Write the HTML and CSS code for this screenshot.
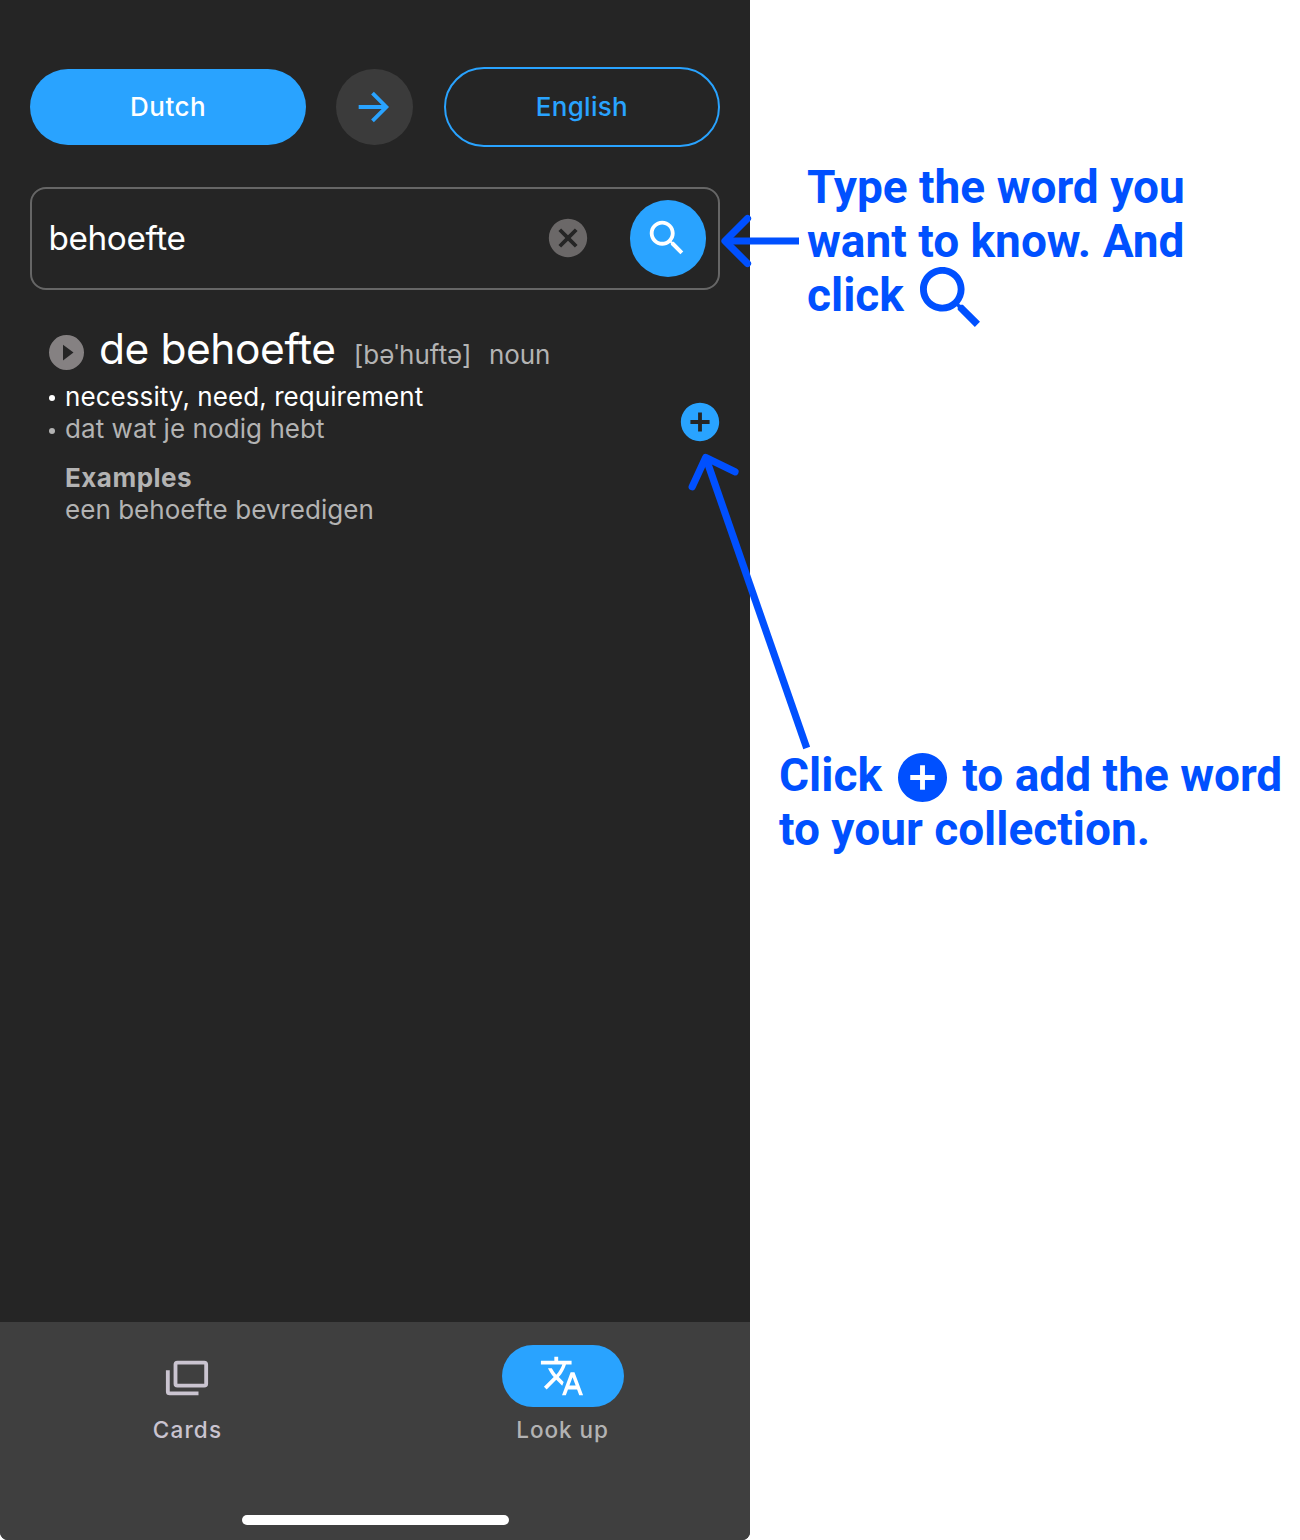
FILE: index.html
```html
<!DOCTYPE html>
<html lang="en">
<head>
<meta charset="utf-8">
<title>Dictionary look up</title>
<link rel="stylesheet" href="styles.css">
</head>
<body>
<main class="page">
  <section class="phone">
    <div class="languages">
      <button class="lang lang-from">Dutch</button>
      <button class="swap" aria-label="Swap"><svg class="icon" viewBox="0 0 24 24"><path d="M4 11v2h12l-5.5 5.5 1.42 1.42L19.84 12l-7.92-7.92L10.5 5.5 16 11z"/></svg></button>
      <button class="lang lang-to">English</button>
    </div>
    <div class="search">
      <span class="query">behoefte</span>
      <svg class="icon clear" viewBox="0 0 24 24"><path d="M12 2C6.470 2 2 6.470 2 12s4.470 10 10 10 10-4.470 10-10S17.530 2 12 2zm5 13.590L15.590 17 12 13.410 8.410 17 7 15.590 10.590 12 7 8.410 8.410 7 12 10.590 15.590 7 17 8.410 13.410 12z"/></svg>
      <button class="go" aria-label="Search"><svg class="icon" viewBox="0 0 24 24"><path d="M15.5 14h-.79l-.28-.27C15.410 12.590 16 11.110 16 9.500 16 5.910 13.090 3 9.500 3S3 5.910 3 9.500 5.910 16 9.500 16c1.610 0 3.090-.59 4.230-1.570l.27.28v.79l5 4.990L20.490 19zm-6 0C7.010 14 5 11.990 5 9.500S7.010 5 9.500 5 14 7.010 14 9.500 11.990 14 9.500 14z"/></svg></button>
    </div>
    <article class="entry">
      <header class="headline">
        <svg class="play" viewBox="2 2 20 20"><path fill-rule="evenodd" d="M12 2a10 10 0 1 0 0 20 10 10 0 0 0 0-20zM10 16.500v-9l6 4.500z"/></svg>
        <h1 class="word">de behoefte</h1>
        <span class="phonetic">[bəˈhuftə]</span>
        <span class="kind">noun</span>
      </header>
      <div class="details">
        <div class="senses">
          <p class="sense translation">necessity, need, requirement</p>
          <p class="sense">dat wat je nodig hebt</p>
          <h2 class="subhead">Examples</h2>
          <p class="example">een behoefte bevredigen</p>
        </div>
        <svg class="icon add" viewBox="0 0 24 24"><path d="M12 2C6.480 2 2 6.480 2 12s4.480 10 10 10 10-4.480 10-10S17.520 2 12 2zm5 11h-4v4h-2v-4H7v-2h4V7h2v4h4z"/></svg>
      </div>
    </article>
    <nav class="tabs">
      <a class="tab"><span class="pill"><svg class="icon cards" viewBox="0 0 24 24"><path fill-rule="evenodd" d="M21 15V5H7v10zM21 3a2 2 0 0 1 2 2v10a2 2 0 0 1-2 2H7a2 2 0 0 1-2-2V5a2 2 0 0 1 2-2zM3 19h15v2H3a2 2 0 0 1-2-2V8h2z"/></svg></span><span class="label">Cards</span></a>
      <a class="tab active"><span class="pill"><svg class="icon" viewBox="0 0 24 24"><path d="M12.870 15.070l-2.540-2.510.03-.03c1.740-1.940 2.980-4.170 3.710-6.530H17V4h-7V2H8v2H1v1.990h11.170C11.500 7.920 10.440 9.750 9 11.350 8.070 10.320 7.300 9.190 6.690 8h-2c.73 1.630 1.730 3.170 2.980 4.560l-5.090 5.020L4 19l5-5 3.110 3.110zM18.500 10h-2L12 22h2l1.120-3h4.750L21 22h2zm-2.620 7l1.620-4.330L19.120 17z"/></svg></span><span class="label">Look up</span></a>
      <span class="home"></span>
    </nav>
  </section>
  <aside class="notes">
    <p class="note note-search">Type the word you<br>want to know. And<br>click <svg class="glass" viewBox="3 3 17.5 17.5"><path d="M15.5 14h-.79l-.28-.27C15.410 12.590 16 11.110 16 9.500 16 5.910 13.090 3 9.500 3S3 5.910 3 9.500 5.910 16 9.500 16c1.610 0 3.090-.59 4.230-1.570l.27.28v.79l5 4.990L20.490 19zm-6 0C7.010 14 5 11.990 5 9.500S7.010 5 9.500 5 14 7.010 14 9.500 11.990 14 9.500 14z"/></svg></p>
    <p class="note note-add">Click <svg class="plus" viewBox="2 2 20 20"><path d="M12 2C6.480 2 2 6.480 2 12s4.480 10 10 10 10-4.480 10-10S17.520 2 12 2zm5 11h-4v4h-2v-4H7v-2h4V7h2v4h4z"/></svg> to add the word<br>to your collection.</p>
  </aside>
  <svg class="arrows" viewBox="0 0 1300 1540">
    <path d="M799 241H725"/><path class="head" d="M747.500 218.500L725 241l22.500 22.500"/>
    <path d="M806.700 748L705.700 457.500"/><path class="head" d="M692.200 486.800l13.500-29.300 29.300 14.300"/>
  </svg>
</main>
</body>
</html>
```
FILE: styles.css
```css
* { box-sizing: border-box; }
body { margin: 0; background: #fff; font-family: Inter, "Liberation Sans", sans-serif; }
h1, h2, p { margin: 0; font-weight: 400; }
button { border: 0; padding: 0; font: inherit; background: none; color: inherit; }
svg { fill: currentColor; flex: none; }
.page { position: relative; display: flex; width: 1300px; height: 1540px; overflow: hidden; }
.phone { display: flex; flex-direction: column; width: 750px; height: 1540px; padding-top: 67px; background: #252525; color: #fff; border-radius: 0 0 8px 8px; overflow: hidden; }
.icon { display: block; width: 46px; height: 46px; }

.languages { display: flex; align-items: center; justify-content: space-between; height: 80px; padding: 0 30.4px; }
.lang { width: 275.5px; height: 76.5px; border-radius: 38.5px; font-size: 26px; font-weight: 500; letter-spacing: .5px; }
.lang-from { background: #29a3ff; }
.lang-to { height: 80px; border: 2px solid #29a3ff; border-radius: 40px; color: #29a3ff; letter-spacing: .3px; }
.lang { padding-bottom: .5px; }
.swap { display: flex; align-items: center; justify-content: center; width: 76.5px; height: 76.5px; margin-right: 1px; padding: 0 2px 1px 0; border-radius: 50%; background: #3b3b3b; color: #29a3ff; }

.search { display: flex; align-items: center; height: 103px; margin: 40px 30.4px 0; padding: 0 11.5px 0 16px; border: 2px solid #666; border-radius: 16px; }
.query { flex: 1; margin-top: -1px; font-size: 33.3px; letter-spacing: -.35px; }
.clear { margin: -2px 38.5px 0 0; color: #6b6868; }
.go { display: flex; align-items: center; justify-content: center; width: 76.5px; height: 76.5px; padding: 0 2px 2px 0; border-radius: 50%; background: #29a3ff; }

.entry { padding: 32px 27px 0 49px; color: #b3b3b3; }
.headline { display: flex; align-items: baseline; height: 59px; line-height: 53px; }
.play { width: 35px; height: 35px; margin-right: 15px; align-self: flex-start; margin-top: 13px; color: #858182; }
.word { font-size: 42.5px; letter-spacing: -.44px; color: #fff; }
.phonetic, .kind { margin-left: 18px; font-size: 26px; }
.phonetic { letter-spacing: .05px; }
.kind { margin-left: 17.5px; letter-spacing: -.1px; }
.details { display: flex; justify-content: space-between; }
.senses { font-size: 26px; line-height: 32.4px; letter-spacing: .07px; }
.sense { display: flex; align-items: center; }
.sense::before { content: ""; width: 6px; height: 6px; margin: 2px 10px 0 0; border-radius: 50%; background: currentColor; }
.translation { color: #fff; }
.subhead { margin-top: 15.7px; padding-left: 16px; font-size: 26px; font-weight: 700; letter-spacing: .5px; }
.example { padding-left: 16px; letter-spacing: .04px; }
.add { margin-top: 18px; color: #29a3ff; }

.tabs { display: flex; flex-wrap: wrap; align-content: flex-start; justify-content: center; height: 218px; margin-top: auto; padding-top: 23px; background: #3f3f3f; }
.tab { display: flex; flex-direction: column; align-items: center; width: 375px; height: 170px; color: #cac4d0; }
.pill { display: flex; align-items: center; justify-content: center; width: 122px; height: 61.5px; padding-right: .5px; border-radius: 31px; }
.cards { margin: 4px .5px 0 0; }
.label { margin-top: 8px; font-size: 22.5px; font-weight: 500; line-height: 30px; letter-spacing: 1.2px; }
.active { color: #b3b3b3; }
.active .pill { background: #29a3ff; color: #fff; }
.active .label { letter-spacing: .95px; }
.home { width: 267px; height: 10px; border-radius: 5px; background: #fff; }

.notes { display: flex; flex-direction: column; width: 550px; padding-top: 160px; color: #0050ff; }
.note { font: 700 46px/54px Roboto, sans-serif; white-space: nowrap; }
.note-search { height: 162px; padding-left: 57px; }
.note-add { margin-top: 426px; padding-left: 29px; }
.glass { width: 60px; height: 60px; margin: -2px 0 0 5px; vertical-align: -16px; }
.plus { width: 49px; height: 49px; margin: 0 3.5px 0 5px; vertical-align: -11px; }
.arrows { position: absolute; inset: 0; width: 1300px; height: 1540px; fill: none; stroke: #0050ff; stroke-width: 7.2; pointer-events: none; }
.head { stroke-linecap: round; stroke-linejoin: round; }
```
